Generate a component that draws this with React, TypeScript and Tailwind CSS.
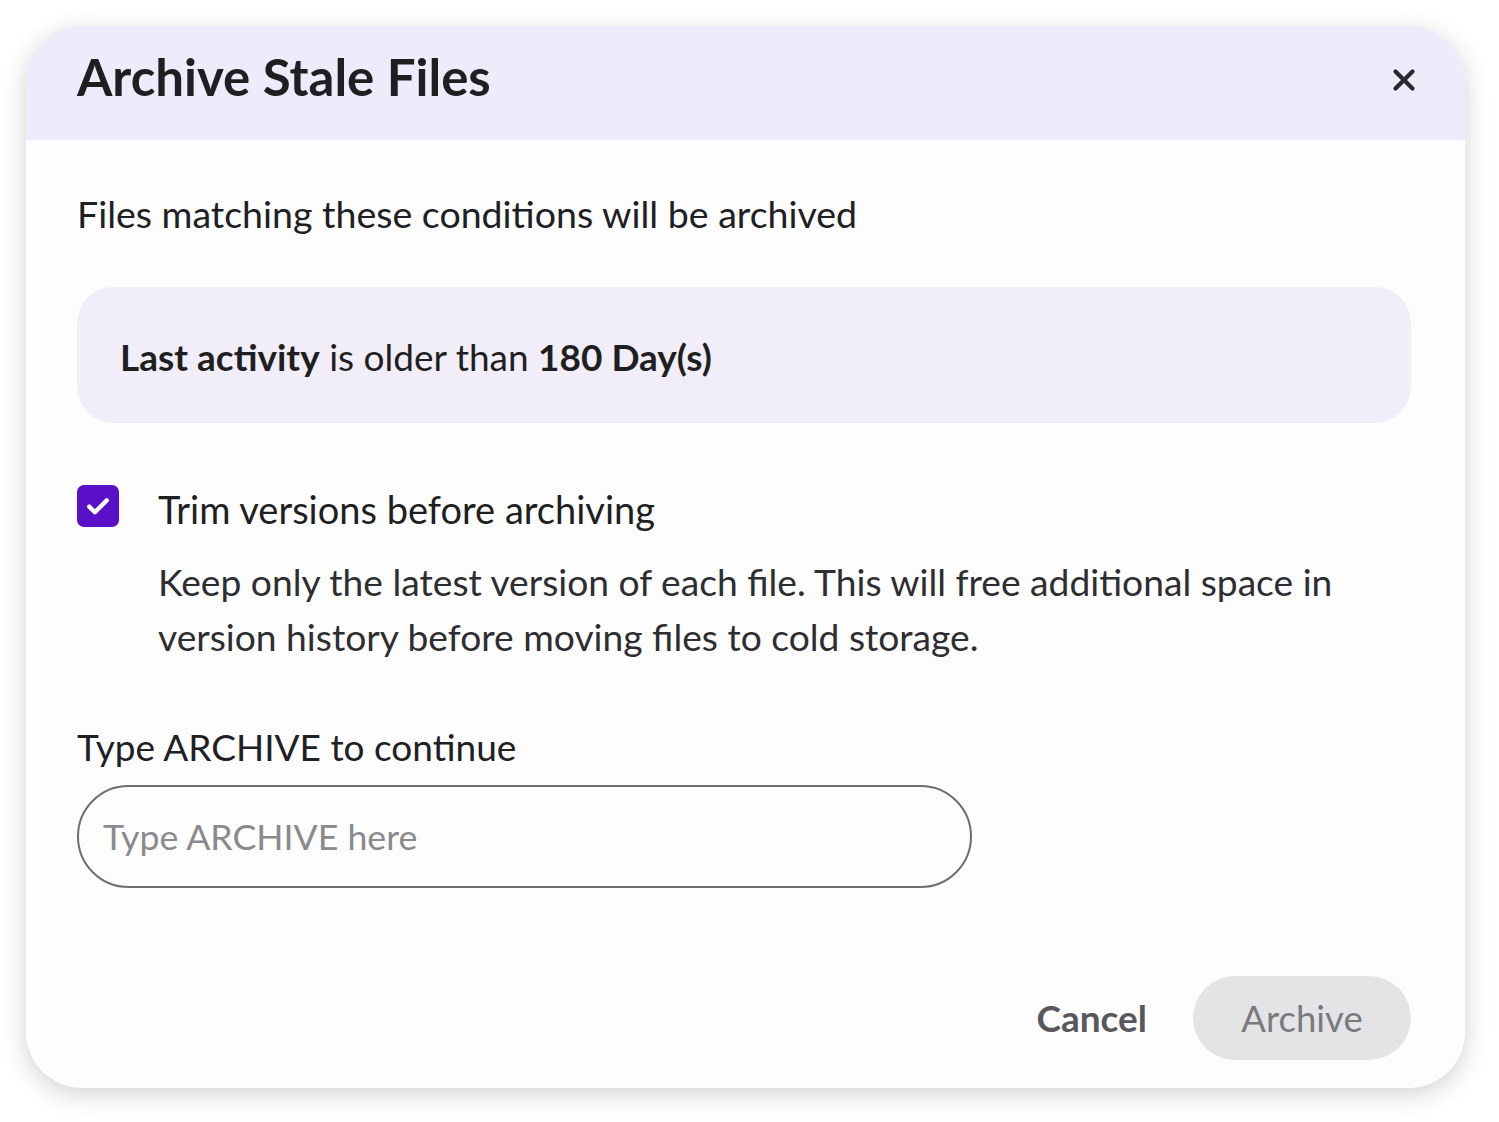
import { X } from "lucide-react";

const FONT = { fontFamily: "Lato, 'Open Sans', sans-serif" };

export default function App() {
  return (
    <div className="min-h-[1122px] w-[1499px] bg-white pl-[26px] pt-[26px]" style={FONT}>
      <div className="flex h-[1062px] w-[1439px] flex-col overflow-hidden rounded-[56px] bg-[#fdfdfd] shadow-[0_6px_24px_rgba(0,0,0,0.18)]">
        <div className="flex h-[114px] shrink-0 items-center justify-between bg-[#efebfa] pb-[14px] pl-[51px] pr-[44px]">
          <h1 className="text-[51px] font-bold leading-none text-[#1f1f22]">Archive Stale Files</h1>
          <button className="mt-[8px] flex h-[34px] w-[34px] items-center justify-center text-[#2a2a2e]">
            <X size={36} strokeWidth={3} />
          </button>
        </div>

        <div className="flex flex-1 flex-col pl-[51px] pr-[54px] pt-[53px] pb-[28px]">
          <p className="text-[37.5px] leading-[42px] text-[#202024]">
            Files matching these conditions will be archived
          </p>

          <div className="mt-[52px] flex h-[136px] items-center rounded-[36px] bg-[#f1eef9] px-[43px] pt-[4px]">
            <p className="text-[37px] leading-[42px] text-[#1f1f22]">
              <span className="font-bold">Last activity</span> is older than{" "}
              <span className="font-bold">180 Day(s)</span>
            </p>
          </div>

          <div className="mt-[62px] flex items-start gap-[39px]">
            <div className="flex h-[42px] w-[42px] shrink-0 items-center justify-center rounded-[7px] bg-[#5a10c6]">
              <svg width="30" height="30" viewBox="0 0 24 24" fill="none">
                <path d="M5 12.5l4.5 4.5L19 7.5" stroke="white" strokeWidth="3.4" strokeLinecap="round" strokeLinejoin="round" />
              </svg>
            </div>
            <div className="flex flex-col">
              <p className="text-[38px] leading-[48px] text-[#1f1f22]">Trim versions before archiving</p>
              <p className="mt-[21px] max-w-[1220px] text-[37.2px] leading-[55px] text-[#2e2e32]">
                Keep only the latest version of each file. This will free additional space in version history before moving files to cold storage.
              </p>
            </div>
          </div>

          <p className="mt-[62px] text-[37px] leading-[42px] text-[#202024]">Type ARCHIVE to continue</p>

          <div className="mt-[17px] flex h-[103px] w-[895px] items-center rounded-full border-2 border-[#6e6e72] px-[24px]">
            <input
              placeholder="Type ARCHIVE here"
              className="w-full bg-transparent text-[35.7px] text-[#333] outline-none placeholder:text-[#8a8a8e]"
              style={FONT}
            />
          </div>

          <div className="mt-auto flex items-center justify-end gap-[46px]">
            <button className="text-[37px] font-bold text-[#58585c]">Cancel</button>
            <button className="flex h-[84px] w-[218px] items-center justify-center rounded-full bg-[#e4e4e6] text-[36.5px] text-[#7a7a7e]">
              Archive
            </button>
          </div>
        </div>
      </div>
    </div>
  );
}
